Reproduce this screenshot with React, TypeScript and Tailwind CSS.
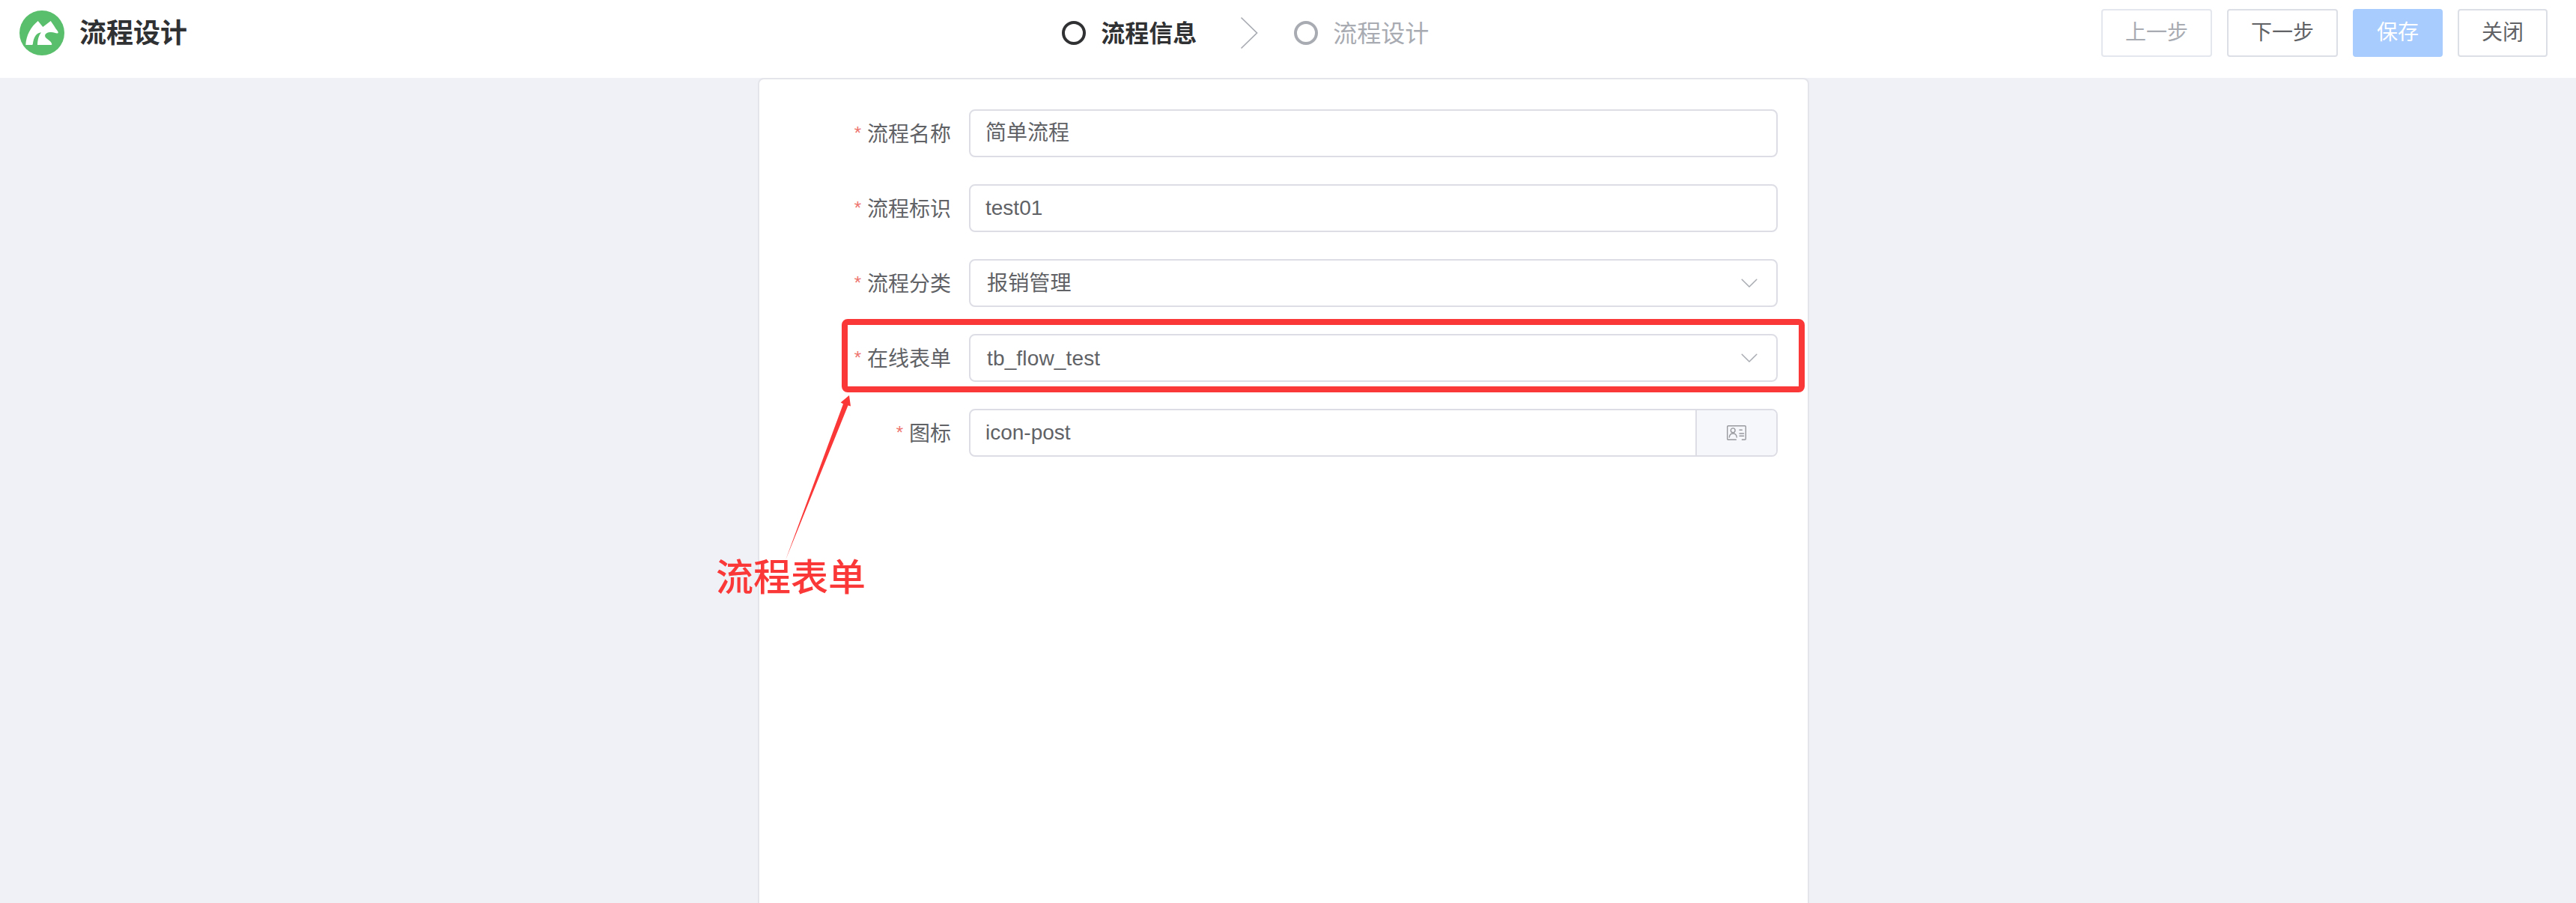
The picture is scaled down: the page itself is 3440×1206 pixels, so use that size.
import React from 'react';

function Logo() {
  return (
    <svg viewBox="0 0 60 60" className="h-[60px] w-[60px]">
      <circle cx="30" cy="30" r="30" fill="#5abf6c" />
      <path
        fill="#fff"
        d="M8.300 46C9 33 15 22 24.700 14L31.300 22L41.700 14L46.500 21Q48 24 51 27.500Q52.600 30.300 50.500 30.500C48 30.300 46 29 42.500 29C37 29 33.500 31 34.200 34.500C34.800 38 42.500 40 43.300 45Q43.400 46 42.400 46H24C24.300 40 25 34.500 29 29.300C23 29.800 19 35 17.800 45Q17.700 46 16.700 46Z"
      />
    </svg>
  );
}

function ChevronDown() {
  return (
    <svg viewBox="0 0 22 13" className="mr-[25px] h-[13px] w-[22px] shrink-0" fill="none">
      <path d="M1.200 1.200L11 11L20.800 1.200" stroke="#a8abb2" strokeWidth="1.500" strokeLinecap="round" strokeLinejoin="round" />
    </svg>
  );
}

function CardIcon() {
  return (
    <svg viewBox="0 0 26 20" className="h-5 w-[26px]" fill="none" stroke="#98999e" strokeWidth="1.400" strokeLinecap="round">
      <path d="M12.300 19.300H2Q.7 19.300 .7 18V2Q.7 .7 2 .7H24Q25.300 .7 25.300 2V18Q25.300 19.300 24 19.300H20.400" />
      <circle cx="8.200" cy="6.800" r="2.900" />
      <path d="M3.300 16C3.600 12.800 5.500 11 8.300 11S13 12.800 13.300 16M17 6.300H20.300M17 11H22.600M17 14.300H22.600" />
    </svg>
  );
}

function Step({ label, active }: { label: string; active?: boolean }) {
  return (
    <div className={active ? 'flex items-center text-[#303133]' : 'flex items-center text-[#a8abb2]'}>
      <span className="h-8 w-8 rounded-full border-4 border-current" />
      <span className={active ? 'ml-5 pt-0.5 text-[32px] leading-none font-bold' : 'ml-5 pt-0.5 text-[32px] leading-none'}>{label}</span>
    </div>
  );
}

const button = 'flex h-16 items-center justify-center whitespace-nowrap rounded border-2 text-[28px] leading-none';

function Header() {
  return (
    <header className="grid h-[104px] shrink-0 grid-cols-3 items-start bg-white pr-[38px] pl-[26px]">
      <div className="flex h-[88px] items-center gap-5">
        <Logo />
        <h1 className="pt-0.5 text-[36px] leading-none font-bold text-[#303133]">流程设计</h1>
      </div>
      <div className="flex h-[88px] items-center pl-[267px]">
        <Step label="流程信息" active />
        <svg viewBox="0 0 24 44" className="mr-12 ml-[58px] h-11 w-6 shrink-0" fill="none">
          <path d="M1.500 1.500L22.500 22L1.500 42.500" stroke="#a8abb2" strokeWidth="1.700" />
        </svg>
        <Step label="流程设计" />
      </div>
      <div className="flex justify-end gap-5 pt-3">
        <button className={`${button} w-[148px] border-[#e4e7ed] text-[#a8abb2]`}>上一步</button>
        <button className={`${button} w-[148px] border-[#dcdfe6] text-[#606266]`}>下一步</button>
        <button className={`${button} w-[120px] border-[#a8ccfd] bg-[#a8ccfd] text-white`}>保存</button>
        <button className={`${button} w-[120px] border-[#dcdfe6] text-[#606266]`}>关闭</button>
      </div>
    </header>
  );
}

type FieldProps = { label: string; value: string; select?: boolean; append?: boolean };

function Field({ label, value, select, append }: FieldProps) {
  return (
    <div className="flex h-16 items-center">
      <div className="flex w-[256px] shrink-0 items-center justify-end pt-[3px] text-[28px] leading-none">
        <span className="mr-2 pb-1 text-[24px] text-[#ee7470]">*</span>
        <span>{label}</span>
      </div>
      <div className="ml-6 flex h-16 flex-1 items-center overflow-hidden rounded-lg border-2 border-[#dddee5]">
        <span className={select ? 'flex-1 pt-0.5 pl-[22px] text-[28px] leading-none tracking-[0.15px]' : 'flex-1 pl-5 text-[28px] leading-none'}>{value}</span>
        {select && <ChevronDown />}
        {append && (
          <div className="flex h-full w-[108px] items-center justify-center border-l-2 border-[#dddee5] bg-[#f5f7fb]">
            <CardIcon />
          </div>
        )}
      </div>
    </div>
  );
}

function Annotation() {
  return (
    <>
      <div className="absolute top-[426px] left-[1124px] h-[98px] w-[1286px] rounded-lg border-8 border-[#fb3838]" />
      <svg viewBox="0 0 96 226" className="absolute top-[526px] left-[1044px] h-[226px] w-24">
        <path d="M90 2L92 16.500L88.500 15.500L5 222L82 13.500L78.700 11.500Z" fill="#fb3838" />
      </svg>
      <div className="absolute top-[747px] left-[956px] text-[50px] leading-[50px] font-medium text-[#fb3838]">流程表单</div>
    </>
  );
}

export default function App() {
  return (
    <div className="relative flex h-[1206px] w-[3440px] flex-col overflow-hidden bg-[#f0f1f6] font-['Liberation_Sans','Noto_Sans_CJK_SC',sans-serif] text-[#606266]">
      <Header />
      <main className="ml-[1012px] flex w-[1404px] flex-1 flex-col gap-9 rounded-t-lg border-2 border-b-0 border-[#e4e5eb] bg-white pt-10 pr-10">
        <Field label="流程名称" value="简单流程" />
        <Field label="流程标识" value="test01" />
        <Field label="流程分类" value="报销管理" select />
        <Field label="在线表单" value="tb_flow_test" select />
        <Field label="图标" value="icon-post" append />
      </main>
      <Annotation />
    </div>
  );
}
